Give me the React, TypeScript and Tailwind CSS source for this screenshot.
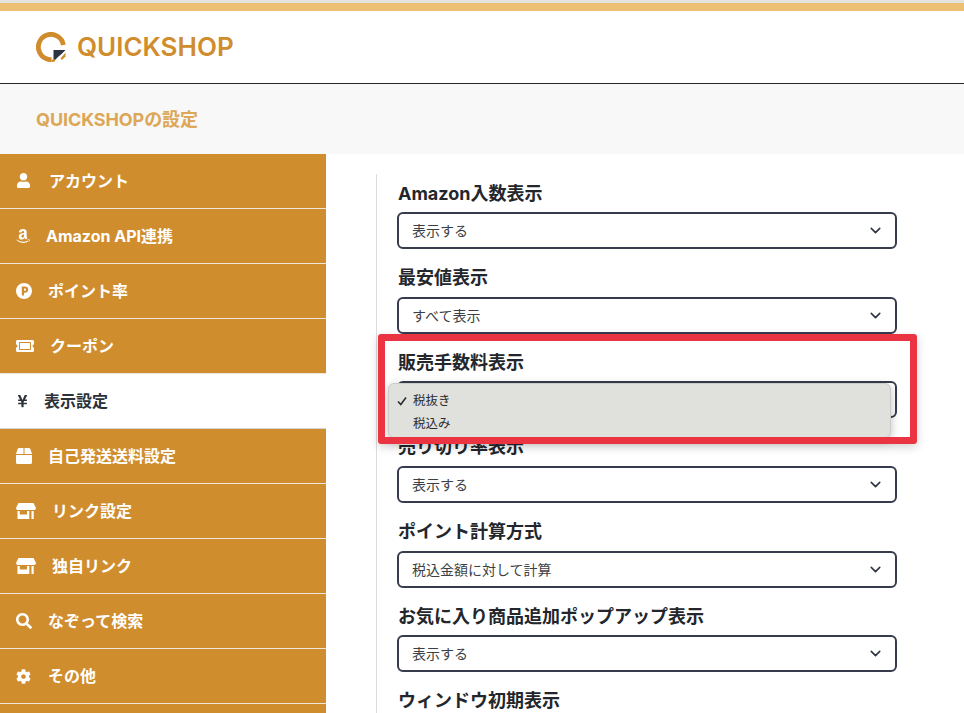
import React from "react";
import { FaUser, FaAmazon, FaTicketAlt, FaYenSign, FaBox, FaSearch, FaCog } from "react-icons/fa";
import { ChevronDown } from "lucide-react";

const font = { fontFamily: '"Inter","Noto Sans CJK JP",sans-serif' };

function PIcon({ className }: { className?: string }) {
  return (
    <svg viewBox="0 0 16 16" className={className}>
      <path fill="currentColor" fillRule="evenodd" d="M8 0a8 8 0 1 1 0 16A8 8 0 0 1 8 0ZM5.8 3.6v8.8h2.2V9.7h1a3.05 3.05 0 0 0 0-6.1H5.8Zm2.2 2h1a1.05 1.05 0 0 1 0 2.1H8V5.6Z" />
    </svg>
  );
}

function StoreIcon() {
  return (
    <svg viewBox="0 0 20 16" className="w-[20px] h-[16px]">
      <path fill="currentColor" d="M2.5 0H17.5L19.8 4.6C20.2 5.8 19.4 7 18 7H2C.6 7-.2 5.8.2 4.6Z" />
      <path fill="currentColor" fillRule="evenodd" d="M1.5 8H3.8V11.5H11V8H13.3V16H1.5Z" />
      <rect x="15.5" y="8" width="2.2" height="8" fill="currentColor" />
    </svg>
  );
}

function Logo() {
  return (
    <svg viewBox="0 0 30 30" className="w-[30px] h-[30px] shrink-0">
      <path d="M22.6 25A12.6 12.6 0 1 1 27.4 13" fill="none" stroke="#d08c2c" strokeWidth="4.8" />
      <path d="M15.5 16.5H30V30H15.5Z" fill="#fff" />
      <path d="M17.5 18H29.5L25 22.5L22.5 24.5L17.5 29.5Z" fill="#2b3440" />
      <path d="M29.5 20.5V24.5L26 28L24.5 26.5Z" fill="#d08c2c" />
      <path d="M15.5 27.6A12.6 12.6 0 0 0 19 27.2V29.6L15.5 30Z" fill="#d08c2c" />
    </svg>
  );
}

const items = [
  { label: "アカウント", icon: <FaUser className="w-[15px] h-[15px]" />, w: "w-[33px]", active: false },
  { label: "Amazon API連携", icon: <FaAmazon className="w-[14px] h-[16px]" />, w: "w-[30px]", active: false },
  { label: "ポイント率", icon: <PIcon className="w-[16px] h-[16px]" />, w: "w-[32px]", active: false },
  { label: "クーポン", icon: <FaTicketAlt className="w-[18px] h-[16px]" />, w: "w-[34px]", active: false },
  { label: "表示設定", icon: <FaYenSign className="w-[11px] h-[14px] ml-[1px]" />, w: "w-[28px]", active: true },
  { label: "自己発送送料設定", icon: <FaBox className="w-[16px] h-[16px]" />, w: "w-[32px]", active: false },
  { label: "リンク設定", icon: <StoreIcon />, w: "w-[36px]", active: false },
  { label: "独自リンク", icon: <StoreIcon />, w: "w-[36px]", active: false },
  { label: "なぞって検索", icon: <FaSearch className="w-[16px] h-[16px]" />, w: "w-[32px]", active: false },
  { label: "その他", icon: <FaCog className="w-[15px] h-[15px]" />, w: "w-[32px]", active: false },
];

const fields = [
  ["Amazon入数表示", "表示する"],
  ["最安値表示", "すべて表示"],
  ["販売手数料表示", "税抜き"],
  ["売り切り率表示", "表示する"],
  ["ポイント計算方式", "税込金額に対して計算"],
  ["お気に入り商品追加ポップアップ表示", "表示する"],
  ["ウィンドウ初期表示", "表示する"],
];

export default function App() {
  return (
    <div style={font} className="relative w-[964px] h-[713px] overflow-hidden bg-white">
      <div className="h-[3px] bg-[#e4e2df]" />
      <div className="h-[8px] bg-[#ecbf72]" />
      <header className="h-[73px] border-b border-[#27282b] flex items-center pl-[36px] gap-[11px]">
        <Logo />
        <span className="text-[26px] font-semibold text-[#cf8d2e] leading-none">QUICKSHOP</span>
      </header>
      <div className="h-[70px] bg-[#f8f8f8] flex items-center pl-[36px] pt-[1px]">
        <span className="text-[18px] font-bold text-[#dca757] tracking-[-0.1px] leading-none">QUICKSHOPの設定</span>
      </div>
      <div className="flex">
        <nav className="w-[326px] shrink-0 bg-[#d08d2d]">
          {items.map((it, i) => (
            <div
              key={it.label}
              className={`h-[55px] pl-[16px] flex items-center border-b ${
                it.active
                  ? "bg-white text-[#2d3138] border-[#d6d6d6]"
                  : "text-white border-[#ece6dc]"
              } ${i === 0 ? "pb-[1px]" : ""}`}
            >
              <span className={`${it.w} shrink-0 flex items-center`}>{it.icon}</span>
              <span className="text-[16px] font-bold leading-none">{it.label}</span>
            </div>
          ))}
          <div className="h-[10px]" />
        </nav>
        <main className="flex-1 pl-[50px] pt-[20px]">
          <div className="border-l border-[#dcdcdc] pl-[20px] w-[521px] h-[540px]">
            {fields.map(([label, value]) => (
              <div key={label} className="h-[84.67px] flex flex-col">
                <div className="h-[38px] pl-[1px] pt-[1px] flex items-center text-[18px] font-bold text-[#23262b] leading-none">
                  {label}
                </div>
                <div className="h-[37px] border-2 border-[#373c4d] rounded-[6px] flex items-center justify-between pl-[13px] pr-[11px] text-[14px] text-[#3c3f45]">
                  <span>{value}</span>
                  <ChevronDown className="w-[17px] h-[17px] text-[#2d3340]" strokeWidth={2.2} />
                </div>
              </div>
            ))}
          </div>
        </main>
      </div>

      {/* native select popup, over the third field */}
      <div className="absolute left-[388px] top-[383px] w-[503px] h-[55px] bg-[#e0e0dd] border border-[#cbcbc8] rounded-[6px] shadow-[0_3px_10px_rgba(0,0,0,0.25)] text-[12.5px] text-[#2c2c2c]">
        <div className="h-[24px] mt-[4px] pt-[2px] flex items-center pl-[8px]">
          <span className="w-[16px] flex items-center">
            <svg viewBox="0 0 10 10" className="w-[10px] h-[10px]">
              <path d="M1 5.5L3.8 8.5L9 1.5" fill="none" stroke="#2c2c2c" strokeWidth="1.6" />
            </svg>
          </span>
          <span>税抜き</span>
        </div>
        <div className="h-[24px] flex items-center pl-[24px]">税込み</div>
      </div>

      {/* annotation rectangle */}
      <div className="absolute left-[378px] top-[334px] w-[539px] h-[110px] border-[7px] border-[#ea3442] rounded-[3px] shadow-[0_3px_10px_rgba(0,0,0,0.18)]" />
    </div>
  );
}
